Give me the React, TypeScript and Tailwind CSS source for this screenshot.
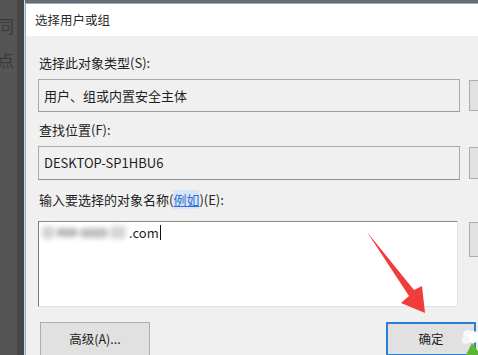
import React from "react";

// Windows "选择用户或组" dialog, cropped screenshot with red arrow annotation
const FONT = { fontFamily: '"Noto Sans CJK SC", "Microsoft YaHei", "Noto Sans", sans-serif' };

export default function App() {
  return (
    <div className="relative w-[478px] h-[355px] overflow-hidden flex bg-[#555555] text-[#1e1e1e]" style={FONT}>
      {/* desktop window behind the dialog */}
      <div className="w-[17px] shrink-0 flex flex-col overflow-hidden text-[17px] leading-none text-[#3a3a3a]">
        <div className="mt-[17px] -ml-[3px]">同</div>
        <div className="mt-[17px] -ml-[3px]">点</div>
      </div>
      <div className="w-[7px] shrink-0 bg-[#474747]" />
      <div className="w-[1px] shrink-0 bg-[#d8d8d8]" />

      {/* dialog */}
      <div className="flex-1 flex flex-col min-w-0 overflow-hidden">
        <div className="h-[3px] bg-[#6c6c6c] shrink-0" />
        <div className="flex-1 flex flex-col border-t border-l border-[#7fb2e5] bg-[#f0f0f0]">
          <div className="h-[32px] shrink-0 bg-white flex items-center pl-[9px] text-[12.5px] text-[#2b2b2b]">
            选择用户或组
          </div>

          <div className="flex flex-col pl-[12px] pt-[18px]">
            <Label className="pl-[1px]">选择此对象类型(S):</Label>
            <Row top="mt-[8px]">
              <div className="shrink-0 w-[422px] h-[33px] border border-[#a9a9a9] border-b-[#9a9a9a] bg-[#f0f0f0] flex items-center pl-[5px] text-[13px]">
                用户、组或内置安全主体
              </div>
              <SideButton h="h-[31px]" />
            </Row>

            <Label className="mt-[9px] pl-[1px]">查找位置(F):</Label>
            <Row top="mt-[8px]">
              <div className="shrink-0 w-[422px] h-[34px] border border-[#a9a9a9] border-b-[#8f8f8f] bg-[#f0f0f0] flex items-center pl-[5px] text-[13px]">
                DESKTOP-SP1HBU6
              </div>
              <SideButton h="h-[32px]" />
            </Row>

            <Label className="mt-[11px] pl-[1px]">
              输入要选择的对象名称(
              <span className="text-[#2f6fd0] underline bg-[#d6e6f8]">例如</span>
              )(E):
            </Label>
            <Row top="mt-[13px]">
              <div className="shrink-0 w-[420px] h-[86px] bg-white border border-[#e3e3e3] border-t-[#8a8a8a] border-l-[#7a7a7a] pl-[3px] pt-[2px]">
                <div className="flex items-center h-[17px] text-[13px]">
                  {/* blurred-out account name */}
                  <span className="flex items-center gap-[2px] blur-[2.5px]">
                    <span className="w-[12px] h-[13px] bg-[#d4d4d4] rounded" />
                    <span className="w-[22px] h-[9px] bg-[#bcbcbc] rounded" />
                    <span className="w-[28px] h-[10px] bg-[#c2c2c2] rounded" />
                    <span className="w-[16px] h-[13px] bg-[#d6d6d6] rounded" />
                  </span>
                  <span className="ml-[3px]">.com</span>
                  <span className="w-[1px] h-[15px] bg-[#111] ml-[1px]" />
                </div>
              </div>
              <SideButton h="h-[35px]" extra="ml-[11px]" />
            </Row>

            <div className="flex mt-[15px]">
              <button className="shrink-0 ml-[2px] w-[110px] h-[34px] bg-[#e1e1e1] border border-[#adadad] text-[12.5px] text-[#1e1e1e]">
                高级(A)...
              </button>
              <button className="shrink-0 ml-[236px] w-[90px] h-[34px] bg-[#e1e1e1] border-2 border-[#2a7fd4] text-[12.5px] text-[#1e1e1e]">
                确定
              </button>
            </div>
          </div>
        </div>
      </div>

      {/* red annotation arrow */}
      <svg className="absolute left-0 top-0 pointer-events-none" width="478" height="355" viewBox="0 0 478 355">
        <polygon
          points="367,232 414,290 422,286 425,313 401,303 409,296"
          fill="#f23c3c"
        />
      </svg>

      {/* corner widget */}
      <svg className="absolute right-0 bottom-0" width="18" height="28" viewBox="0 0 18 28">
        <circle cx="8" cy="8" r="5" fill="#fafafa" />
        <circle cx="13" cy="10" r="6" fill="#ffffff" />
        <circle cx="6" cy="13" r="4" fill="#f5f5f5" />
        <polygon points="12,16 18,24 18,28 6,28" fill="#5cb82e" />
      </svg>
    </div>
  );
}

function Label({ children, className = "" }: { children: React.ReactNode; className?: string }) {
  return <div className={`h-[17px] leading-[17px] text-[13px] text-[#222] ${className}`}>{children}</div>;
}

function Row({ children, top }: { children: React.ReactNode; top: string }) {
  return <div className={`flex items-start ${top}`}>{children}</div>;
}

function SideButton({ h, extra = "ml-[9px]" }: { h: string; extra?: string }) {
  return <div className={`${extra} mt-[1px] w-[20px] ${h} bg-[#e1e1e1] border border-[#adadad] shrink-0`} />;
}
